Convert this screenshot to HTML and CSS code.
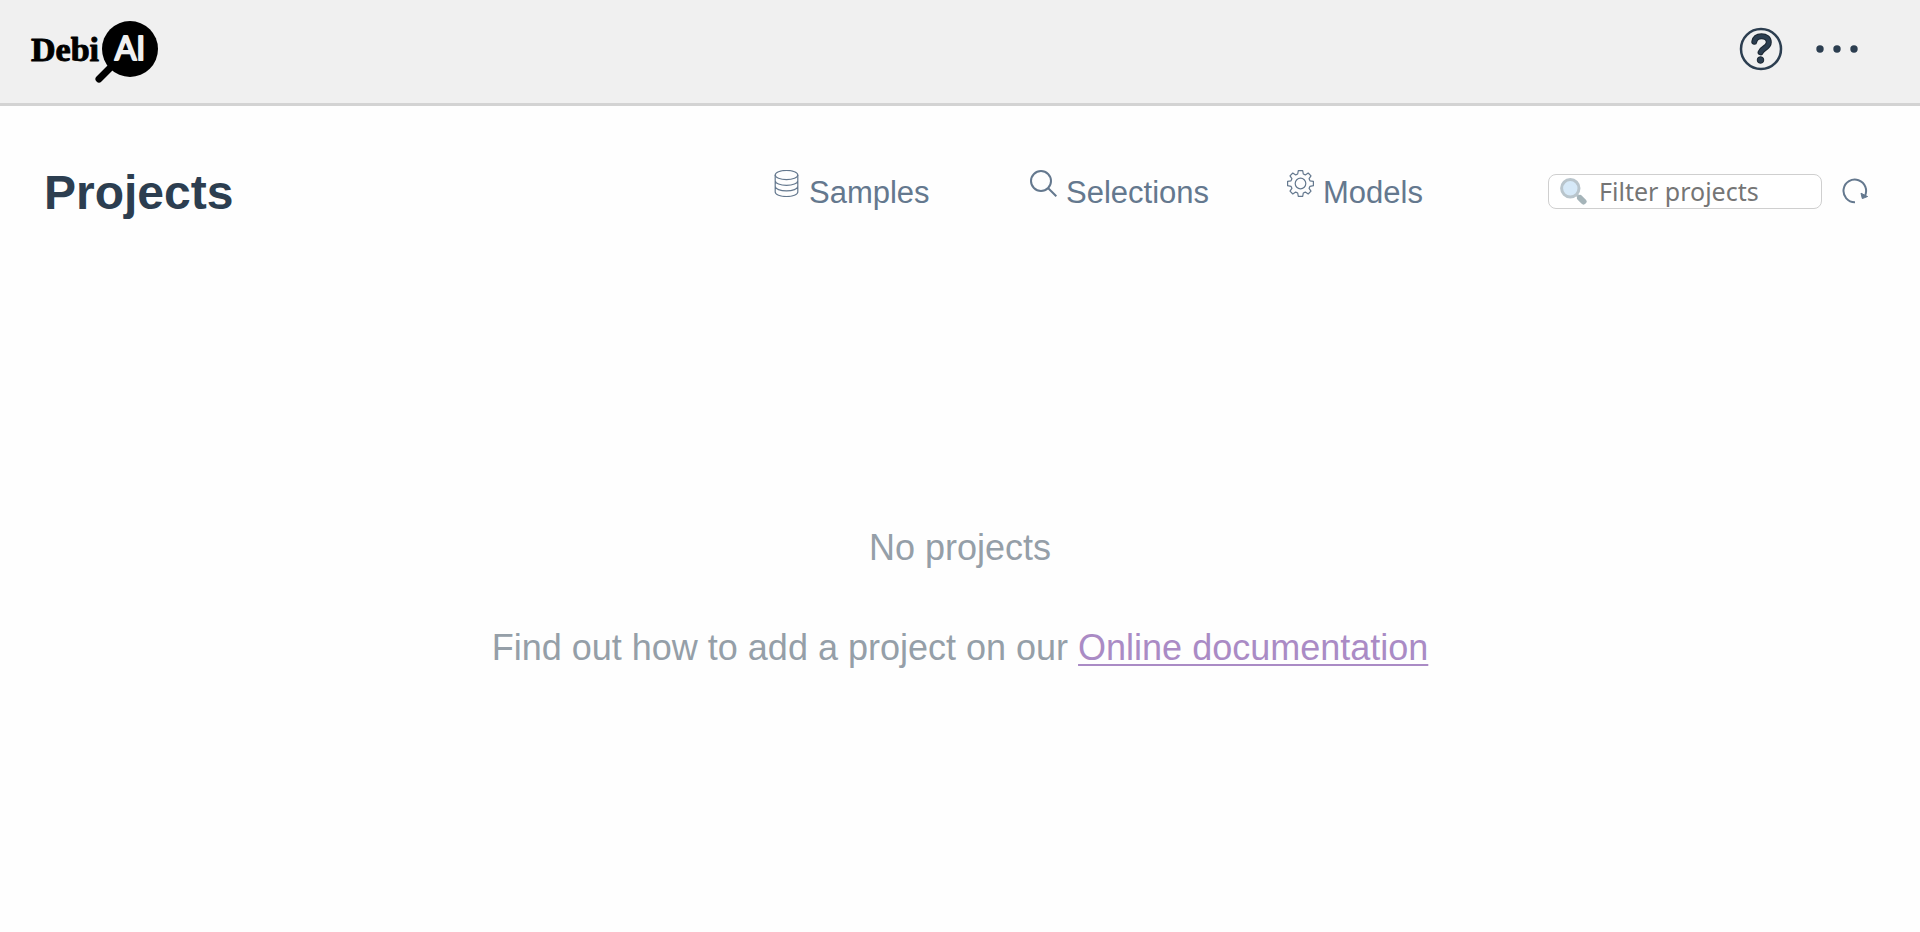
FILE: index.html
```html
<!DOCTYPE html>
<html lang="en">
<head>
<meta charset="utf-8">
<title>DebiAI</title>
<link rel="stylesheet" href="styles.css">
</head>
<body>
<header class="header">
  <a class="logo" href="#" aria-label="DebiAI home">
    <svg width="130" height="66" viewBox="0 0 130 66">
      <text class="logo-word" x="1" y="41">Debi</text>
      <path d="M82 46 L69 59" stroke="#000" stroke-width="7" stroke-linecap="round"/>
      <circle cx="100" cy="29" r="28"/>
      <text class="logo-mark" x="100" y="40" text-anchor="middle">AI</text>
    </svg>
  </a>
  <div class="header-actions">
    <button class="icon-button" aria-label="Help">
      <svg width="44" height="44" viewBox="0 0 44 44" fill="none">
        <circle cx="22" cy="22" r="20" stroke="#2c3e50" stroke-width="2.500"/>
        <path d="M15.300 14.800C16 10.700 19 9.300 22.500 9.300C27 9.300 29.800 11.600 29.800 15.200C29.800 18.500 27.500 20 25 21.600C22.800 23 22.200 23.800 21.600 25.300" stroke="#1b2631" stroke-width="6" stroke-linecap="round"/>
        <path d="M15.300 14.800C16 10.700 19 9.300 22.500 9.300C27 9.300 29.800 11.600 29.800 15.200C29.800 18.500 27.500 20 25 21.600C22.800 23 22.200 23.800 21.600 25.300" stroke="#2c3e50" stroke-width="4" stroke-linecap="round"/>
        <circle cx="21.500" cy="33" r="3.300" fill="#2c3e50" stroke="#1b2631"/>
      </svg>
    </button>
    <button class="icon-button" aria-label="More options">
      <svg width="44" height="44" viewBox="0 0 44 44" fill="#2c3e50">
        <circle cx="5" cy="22" r="3.700"/><circle cx="22" cy="22" r="3.700"/><circle cx="39" cy="22" r="3.700"/>
      </svg>
    </button>
  </div>
</header>
<main class="main">
  <div class="toolbar">
    <h1 class="title">Projects</h1>
    <ul class="legend">
      <li class="legend-item">
        <svg class="legend-icon" viewBox="0 0 27 27" fill="none" stroke="#64788e" stroke-width="1.200">
          <ellipse cx="13.500" cy="5" rx="11.300" ry="4.600"/>
          <path d="M2.200 5V22C2.200 24.600 7.300 26.500 13.500 26.500S24.800 24.600 24.800 22V5M2.200 10.700C2.200 13.300 7.300 15.300 13.500 15.300S24.800 13.300 24.800 10.700M2.200 16.300C2.200 19 7.300 20.900 13.500 20.900S24.800 19 24.800 16.300"/>
        </svg>
        <span>Samples</span>
      </li>
      <li class="legend-item">
        <svg class="legend-icon" viewBox="0 0 27 27" fill="none" stroke="#64788e" stroke-width="2">
          <circle cx="11" cy="11" r="10"/><path d="M18 18L26.300 26.300"/>
        </svg>
        <span>Selections</span>
      </li>
      <li class="legend-item">
        <svg class="legend-icon" viewBox="0 0 27 27" fill="none" stroke="#64788e" stroke-width="1.200" stroke-linejoin="round">
          <circle cx="13.500" cy="13.500" r="5.300"/>
          <path d="M11.300 .6H15.700L16.300 4L18.300 4.900L21.200 3L24 5.800L22.100 8.700L23 10.800L26.400 11.300V15.700L23 16.300L22.100 18.300L24 21.200L21.200 24L18.300 22.100L16.300 23L15.700 26.400H11.300L10.700 23L8.700 22.100L5.800 24L3 21.200L4.900 18.300L4 16.300L.6 15.700V11.300L4 10.800L4.900 8.700L3 5.800L5.800 3L8.700 4.900L10.700 4Z"/>
        </svg>
        <span>Models</span>
      </li>
    </ul>
    <label class="filter">
      <svg width="27" height="27" viewBox="0 0 27 27" fill="none">
        <path d="M16 16L20 20" stroke="#b4c0c6" stroke-width="3"/>
        <path d="M20 20L23.500 23.500" stroke="#a5b4b9" stroke-width="6" stroke-linecap="round"/>
        <circle cx="10.300" cy="10.300" r="8.700" fill="#d6e9f8" stroke="#b9c5cc" stroke-width="3"/>
      </svg>
      <input class="filter-input" type="text" placeholder="Filter projects" aria-label="Filter projects">
    </label>
    <button class="icon-button refresh" aria-label="Refresh">
      <svg width="26" height="26" viewBox="0 0 26 26" fill="none">
        <path d="M13 24.200A11.300 11.300 0 1 1 22.600 18.500" stroke="#64788e" stroke-width="2"/>
        <path d="M19 15.200L22.500 17L25.600 18.500L20.300 20.600Z" fill="#64788e" stroke="#64788e"/>
      </svg>
    </button>
  </div>
  <section class="empty">
    <p>No projects</p>
    <p>Find out how to add a project on our <a class="doc-link" href="#">Online documentation</a></p>
  </section>
</main>
</body>
</html>
```
FILE: styles.css
```css
* {
  box-sizing: border-box;
}

body {
  display: flex;
  flex-direction: column;
  min-height: 100vh;
  margin: 0;
  background: #fefefe;
  color: #2c3e50;
  font-family: "Liberation Sans", Arial, sans-serif;
}

.header {
  display: flex;
  align-items: flex-start;
  justify-content: space-between;
  padding: 20px 61px 17px 30px;
  background: #f0f0f0;
  border-bottom: 3px solid #d3d3d3;
}

.icon-button svg,
.logo svg {
  display: block;
}

.logo-word {
  font: bold 34px "Liberation Serif", serif;
  stroke: #000;
  stroke-width: 1px;
  stroke-linejoin: round;
}

.logo-mark {
  font: 400 32px Lato, sans-serif;
  fill: #f0f0f0;
  stroke: #f0f0f0;
  stroke-width: 2px;
  stroke-linejoin: round;
}

.header-actions {
  display: flex;
  gap: 32px;
  padding-top: 7px;
}

.icon-button {
  padding: 0;
  border: 0;
  background: none;
  cursor: pointer;
}

.main {
  display: flex;
  flex: 1;
  flex-direction: column;
}

.toolbar {
  display: flex;
  align-items: center;
  padding: 59px 52px 42px 44px;
}

.title {
  flex: 1;
  margin: 0;
  font-size: 48px;
  line-height: 56px;
}

.legend {
  display: flex;
  margin: 0;
  padding: 0;
  list-style: none;
}

.legend-item {
  display: flex;
  align-items: center;
  gap: 9px;
  width: 257px;
  color: #64788e;
  font-size: 31px;
  line-height: 36px;
}

.legend-icon {
  width: 27px;
  height: 27px;
  margin-bottom: 20px;
}

.filter {
  display: flex;
  align-items: center;
  gap: 12px;
  width: 274px;
  height: 35px;
  margin: 0 20px 4px 4px;
  padding: 0 10px 0 11px;
  border: 1px solid #cfcfcf;
  border-radius: 8px;
  background: #fff;
}

.refresh {
  margin-bottom: 4px;
}

.filter-input {
  flex: 1;
  min-width: 0;
  padding: 0;
  border: 0;
  outline: 0;
  background: none;
  font: 25px/32px "Noto Sans", sans-serif;
}

.filter-input::placeholder {
  color: #757575;
}

.empty {
  display: flex;
  flex: 1;
  flex-direction: column;
  align-items: center;
  justify-content: center;
  gap: 58px;
  color: #959fa8;
  font-size: 36px;
  line-height: 42px;
}

.empty p {
  margin: 0;
}

.doc-link {
  color: #aa8bc5;
  text-decoration-thickness: 2px;
  text-decoration-skip-ink: none;
  text-underline-offset: 4px;
}
```
